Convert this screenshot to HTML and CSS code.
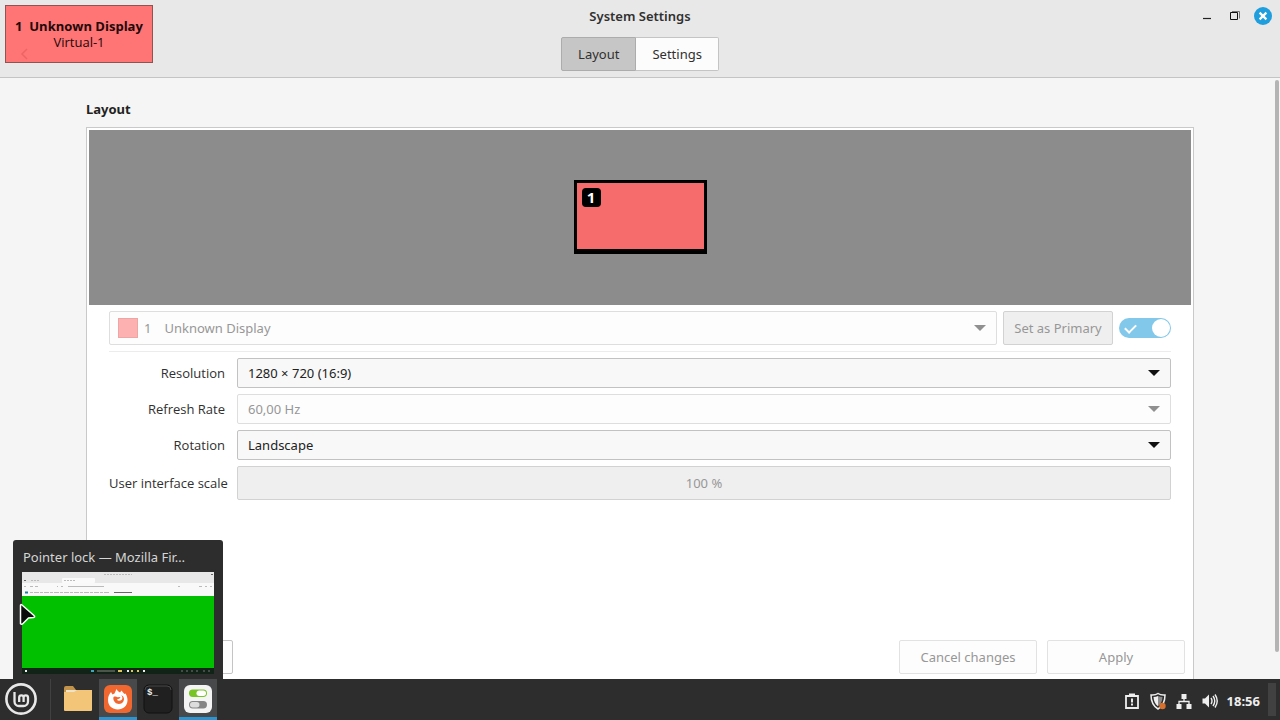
FILE: index.html
```html
<!DOCTYPE html>
<html lang="en">
<head>
<meta charset="utf-8">
<title>System Settings</title>
<link rel="stylesheet" href="styles.css">
</head>
<body>
<div class="window">
  <header class="header">
    <div class="titlebar">
      <h1 class="title">System Settings</h1>
      <div class="window-buttons">
        <button class="window-button" type="button" aria-label="Minimize"><svg width="18" height="18" viewBox="0 0 18 18"><path d="M5 11.500h8" stroke="#222" stroke-width="1.2"/></svg></button>
        <button class="window-button" type="button" aria-label="Restore"><svg width="18" height="18" viewBox="0 0 18 18"><path d="M6 4.500h7.500v7" fill="none" stroke="#777"/><path d="M4.500 5.500h7v7h-7z" fill="none" stroke="#111"/></svg></button>
        <button class="window-button" type="button" aria-label="Close"><svg width="18" height="18" viewBox="0 0 18 18"><circle cx="9" cy="9" r="9" fill="#1f9ede"/><path d="M5.600 5.600l6.800 6.800M12.400 5.600l-6.800 6.800" stroke="#fff" stroke-width="2.200"/></svg></button>
      </div>
    </div>
    <nav class="tabs">
      <button class="tab tab-active" type="button">Layout</button>
      <button class="tab" type="button">Settings</button>
    </nav>
  </header>

  <main class="content">
    <h2 class="section-title">Layout</h2>
    <section class="card">
      <div class="canvas">
        <div class="monitor"><span class="monitor-number">1</span></div>
      </div>
      <form class="form">
        <div class="display-row">
          <div class="select-wrap select-display is-disabled">
            <span class="swatch"></span>
            <select class="select" aria-label="Display" disabled><option>1&emsp;Unknown Display</option></select>
          </div>
          <button class="button button-primary" type="button" disabled>Set as Primary</button>
          <input class="switch" type="checkbox" aria-label="Display enabled" checked disabled>
        </div>
        <div class="fields">
          <label class="label" for="resolution">Resolution</label>
          <div class="select-wrap"><select class="select" id="resolution"><option>1280 × 720 (16:9)</option></select></div>
          <label class="label" for="refresh">Refresh Rate</label>
          <div class="select-wrap is-disabled"><select class="select" id="refresh" disabled><option>60,00 Hz</option></select></div>
          <label class="label" for="rotation">Rotation</label>
          <div class="select-wrap"><select class="select" id="rotation"><option>Landscape</option></select></div>
          <label class="label" for="scale">User interface scale</label>
          <button class="button button-scale" id="scale" type="button" disabled>100 %</button>
        </div>
      </form>
      <div class="actions">
        <button class="button action action-first" type="button" aria-label="Defaults"></button>
        <button class="button action" type="button" disabled>Cancel changes</button>
        <button class="button action" type="button" disabled>Apply</button>
      </div>
    </section>
  </main>
  <div class="scrollbar"></div>
</div>

<footer class="panel">
  <button class="panel-item menu" type="button" aria-label="Menu">
    <svg width="34" height="34" viewBox="0 0 34 34" fill="none" stroke="#e8e8e8"><circle cx="17" cy="17" r="14.600" stroke-width="2.600"/><path d="M10.500 10v9.500a4.500 4.500 0 0 0 4.500 4.500h4.500a4.500 4.500 0 0 0 4.500-4.500v-4a2.200 2.200 0 0 0-4.400 0v4.500M19.600 15.500a2.200 2.200 0 0 0-4.400 0v4.500" stroke-width="2.300"/></svg>
  </button>
  <div class="panel-separator"></div>
  <button class="panel-item" type="button" aria-label="Files">
    <svg width="30" height="30" viewBox="0 0 30 30"><path d="M1 4q0-2 2-2h7l3 4h14q2 0 2 2v18H1z" fill="#c2934a"/><path d="M3 6h24v5H3z" fill="#eee3c8"/><path d="M1 8h10l3-2h15v20q0 1-1 1H2q-1 0-1-1z" fill="#f3c578"/></svg>
  </button>
  <button class="panel-item panel-running" type="button" aria-label="Firefox">
    <svg width="30" height="30" viewBox="0 0 30 30"><rect x="1" y="1" width="28" height="28" rx="6" fill="#f0682f"/><path d="M5 16c0-4 1.500-6 3-8l1.500 2.500 2-1 2-4.500c1 2 2 2.500 3.500 3.500l1.500-2c1 1.500 2 2.500 3 3.500l1-.5c1.500 2.500 2 4.500 2 6.500 0 6-4.500 9.500-9.700 9.500S5 22 5 16z" fill="#fff"/><path d="M10.500 13c1.500-.8 3-.5 4 .3l3-.3c-.5 1.500-2 2-3.500 2.500.5 1.500 3 1.800 4.500.5 1.500-1.200 1-3.500-.3-5 3 1.500 3.500 4.500 2 6.700-1.800 2.600-5.700 3-8 .8-1.500-1.500-2.200-3.500-1.700-5.500z" fill="#f0682f"/></svg>
  </button>
  <button class="panel-item" type="button" aria-label="Terminal">
    <svg width="30" height="30" viewBox="0 0 30 30"><rect x="1" y="1" width="28" height="28" rx="5" fill="#202020" stroke="#111"/><path d="M2 6a4 4 0 0 1 4-4h18a4 4 0 0 1 4 4" fill="none" stroke="#484848"/><text class="prompt" x="4" y="11">$_</text></svg>
  </button>
  <button class="panel-item panel-running" type="button" aria-label="System Settings">
    <svg width="30" height="30" viewBox="0 0 30 30"><rect x="1" y="1" width="28" height="28" rx="6" fill="#f4f4f4"/><rect x="6" y="5.500" width="18" height="7.500" rx="3.700" fill="#78c325"/><rect x="13.500" y="6.500" width="9.500" height="5.500" rx="2.700" fill="#fff"/><rect x="6" y="17" width="18" height="7.500" rx="3.700" fill="#858585"/><rect x="7" y="18" width="9.500" height="5.500" rx="2.700" fill="#ddd"/></svg>
  </button>
  <div class="tray">
    <svg width="18" height="18" viewBox="0 0 18 18"><path d="M3 4h12v12H3z" fill="none" stroke="#eee" stroke-width="1.800"/><path d="M6 1.500h6V5H6zM8 6.500h2v4H8zM8 11.500h2v2H8z" fill="#eee"/></svg>
    <svg width="18" height="18" viewBox="0 0 18 18"><path d="M9 1.500q3 2 7 1.500c0 7-2 11-7 14-5-3-7-7-7-14q4 .5 7-1.500z" fill="none" stroke="#eee" stroke-width="1.500"/><path d="M9 4q2 1 4.500 1C13.300 9 12 12 9 14.300z" fill="#8b8b8b"/><path d="M9 4q-2 1-4.500 1C4.700 9 6 12 9 14.300z" fill="#eee"/><circle cx="13.500" cy="14" r="3.200" fill="#d8702e"/></svg>
    <svg width="18" height="18" viewBox="0 0 18 18"><path d="M6.500 2h5v5h-5zM1.500 12h5v5h-5zM11.500 12h5v5h-5z" fill="#eee"/><path d="M9 7v3M4 12V9.500h10V12" fill="none" stroke="#eee" stroke-width="1.300"/></svg>
    <svg width="18" height="18" viewBox="0 0 18 18"><path d="M1.500 6.500H4l4-4v13l-4-4H1.500z" fill="#eee"/><path d="M10 6q2 3 0 6M12 4q3.500 5 0 10M14 2.500q4.500 6.500 0 13" fill="none" stroke="#eee" stroke-width="1.400"/></svg>
    <time class="clock">18:56</time>
  </div>
  <div class="show-desktop"></div>
</footer>

<aside class="osd">
  <strong>1&nbsp; Unknown Display</strong>
  <span>Virtual-1</span>
  <svg class="osd-back" width="10" height="12" viewBox="0 0 10 12"><path d="M8 1L3 6l5 5" fill="none" stroke="#ee6464" stroke-width="1.500"/></svg>
</aside>

<aside class="preview">
  <p class="preview-title">Pointer lock — Mozilla Fir…</p>
  <svg class="preview-image" viewBox="0 0 192 102">
    <rect width="192" height="102" fill="#00c000"/>
    <rect width="192" height="24" fill="#f9f9f9"/>
    <rect width="192" height="11" fill="#e8e8e8"/>
    <rect x="40" y="6" width="33" height="5" rx="1" fill="#fafafa"/>
    <g fill="none" stroke="#bbb">
      <path d="M82 2.500h28M42 8.500h11M9 8.500h9" stroke-dasharray="2 1"/>
      <path d="M2 14.500h2m4 0h3m2 0h3M35 14.500h1m3 0h2m5 0h36m74 0h2m19 0h3m3 0h2m3 0h2" />
      <path d="M8 20.500h79" stroke-dasharray="3 1 5 1"/>
      <path d="M92 20.500h18M189 2.500h2M2 8.500h2" stroke="#666"/>
      <path d="M3 20.500h3" stroke="#1581a0" stroke-width="2"/>
    </g>
    <rect y="96" width="192" height="6" fill="#102316"/>
    <g fill="none" stroke-width="2">
      <path d="M3 99h2m116 0h2m-18 0h2" stroke="#eee"/><path d="M69 99h3" stroke="#3ba8c0"/><path d="M75 99h18" stroke="#4b5548"/>
      <path d="M96 99h4m9 0h2m4 0h2" stroke="#e2c65b"/><path d="M159 99h17m5 0h7" stroke="#777" stroke-width="1" stroke-dasharray="2 3"/>
    </g>
  </svg>
</aside>

<svg class="cursor" width="18" height="24" viewBox="0 0 18 24"><path d="M1.500 2.500Q1.500 1 3 2l12 10.500q1.500 1.500-.5 2L9.500 15 4 20.500q-1.500 1.500-2.500 0z" fill="#0b0b0b" stroke="#fff" stroke-width="1.500"/></svg>
</body>
</html>
```
FILE: styles.css
```css
* { box-sizing: border-box; }

body {
  margin: 0;
  height: 100vh;
  display: flex;
  flex-direction: column;
  overflow: hidden;
  background: #f5f5f5;
  color: #303030;
  font: 13px/16px "Noto Sans", "Open Sans", sans-serif;
}

button, select { font: inherit; color: inherit; }
h1, h2, p { margin: 0; font-size: inherit; }

.window {
  position: relative;
  flex: 1;
  min-height: 0;
  display: flex;
  flex-direction: column;
}

.header {
  padding-bottom: 6px;
  border-bottom: 1px solid #c4c4c4;
  background: #e8e8e8;
}
.titlebar {
  display: grid;
  grid-template-columns: 1fr auto 1fr;
  align-items: center;
  height: 32px;
  margin-bottom: 5px;
}
.title { grid-column: 2; font-weight: 600; }
.window-buttons {
  display: flex;
  justify-content: flex-end;
  gap: 10px;
  padding-right: 8px;
}
.window-button {
  width: 18px;
  height: 18px;
  padding: 0;
  border: 0;
  background: none;
}
.window-button svg { display: block; }

.tabs { display: flex; justify-content: center; }
.tab {
  height: 34px;
  padding: 0 16px;
  border: 1px solid #c4c4c4;
  border-left: 0;
  border-radius: 0 2px 2px 0;
  background: #fcfcfc;
}
.tab-active {
  border: 1px solid #acacac;
  border-radius: 2px 0 0 2px;
  background: #c6c6c6;
}

.content {
  flex: 1;
  min-height: 0;
  display: flex;
  flex-direction: column;
  padding: 23px 86px 0;
}
.section-title { margin-bottom: 10px; font-weight: 700; color: #222; }
.card {
  flex: 1;
  min-height: 0;
  display: flex;
  flex-direction: column;
  padding: 2px 2px 5px;
  border: 1px solid #c9c9c9;
  border-bottom: 0;
  background: #fff;
}
.canvas {
  flex: none;
  display: flex;
  justify-content: center;
  height: 175px;
  padding-top: 50px;
  background: #8c8c8c;
}
.monitor {
  width: 133px;
  height: 74px;
  padding: 5px;
  border: 3px solid #000;
  border-bottom-width: 5px;
  background: #f66c6c;
}
.monitor-number {
  display: block;
  width: 19px;
  height: 19px;
  border-radius: 4px;
  background: #000;
  color: #fff;
  font-size: 15px;
  font-weight: 700;
  line-height: 19px;
  text-align: center;
}

.form { padding: 6px 20px 0; }
.display-row {
  display: flex;
  align-items: center;
  gap: 6px;
  padding-bottom: 6px;
  border-bottom: 1px solid #ececec;
}
.select-wrap { position: relative; display: flex; }
.select-display { flex: 1; }
.select {
  width: 100%;
  height: 30px;
  padding: 0 30px 1px 10px;
  border: 1px solid #c2c2c2;
  border-radius: 2px;
  background: #f8f8f8;
  color: #222;
  appearance: none;
}
.select-wrap::after {
  content: "";
  position: absolute;
  top: 50%;
  right: 11px;
  width: 12px;
  height: 6px;
  margin-top: -3px;
  background: #111;
  clip-path: polygon(0 0, 100% 0, 50% 100%);
  pointer-events: none;
}
.is-disabled .select {
  border-color: #dedede;
  background: #fdfdfd;
  color: #979797;
  opacity: 1;
}
.is-disabled::after { background: #909090; }
.select-display .select { height: 34px; padding-left: 34px; }
.swatch {
  position: absolute;
  top: 7px;
  left: 9px;
  width: 20px;
  height: 20px;
  border: 1px solid #eda6a6;
  background: #fdb1b1;
}
.button {
  height: 34px;
  padding: 0 11px;
  border: 1px solid #d2d2d2;
  border-radius: 2px;
  background: #efefef;
  color: #979797;
}
.button-primary { width: 110px; padding: 0; }
.switch {
  position: relative;
  width: 52px;
  height: 20px;
  margin: 0;
  border-radius: 10px;
  background: #82c8ea;
  appearance: none;
}
.switch::before {
  content: "";
  position: absolute;
  top: 6px;
  left: 6px;
  width: 9px;
  height: 5px;
  border: solid #fff;
  border-width: 0 0 2px 2px;
  transform: rotate(-45deg);
}
.switch::after {
  content: "";
  position: absolute;
  top: 1px;
  right: 1px;
  width: 18px;
  height: 18px;
  border-radius: 50%;
  background: #fff;
}

.fields {
  display: grid;
  grid-template-columns: 116px 1fr;
  gap: 6px 12px;
  align-items: center;
  padding-top: 6px;
}
.label {
  font-family: "Open Sans", "Noto Sans", sans-serif;
  text-align: right;
  white-space: nowrap;
}

.actions {
  display: flex;
  gap: 10px;
  margin-top: auto;
  padding: 0 6px;
}
.action {
  width: 138px;
  border-color: #e2e2e2;
  background: #fdfdfd;
}
.action-first { margin-right: auto; border-color: #c4c4c4; }

.scrollbar {
  position: absolute;
  top: 80px;
  right: 1px;
  bottom: 27px;
  width: 4px;
  border-radius: 2px;
  background: #b4b4b4;
}

.panel {
  flex: none;
  display: flex;
  height: 41px;
  background: #2d2d2d;
}
.panel-item {
  display: flex;
  align-items: center;
  justify-content: center;
  width: 38px;
  margin-right: 2px;
  padding: 0 0 1px;
  border: 0;
  background: none;
}
.panel-running {
  padding-top: 2px;
  border-bottom: 3px solid #2c94d0;
  background: #48494b;
}
.menu { width: 42px; margin-right: 8px; }
.panel-separator { width: 1px; margin-right: 8px; background: #414141; }
.prompt { font: 700 9px "Liberation Mono", monospace; fill: #eee; }
.tray {
  display: flex;
  align-items: center;
  gap: 8px;
  margin-left: auto;
  padding: 2px 8px 0 0;
}
.clock {
  color: #eee;
  font-family: "Open Sans", "Noto Sans", sans-serif;
  font-weight: 700;
}
.show-desktop { width: 8px; margin: 4px 4px 4px 0; background: #414141; }

.osd {
  position: absolute;
  top: 5px;
  left: 5px;
  display: flex;
  flex-direction: column;
  align-items: center;
  width: 148px;
  padding: 12px 0;
  border: 1px solid #93524f;
  background: #ff7474;
  color: #220808;
  font-family: "Open Sans", "Noto Sans", sans-serif;
  white-space: nowrap;
}
.osd-back { position: absolute; bottom: 2px; left: 13px; }

.preview {
  position: absolute;
  bottom: 41px;
  left: 13px;
  width: 210px;
  padding: 9px 9px 5px;
  border-radius: 3px 3px 0 0;
  background: #2d2d2d;
  color: #d6d6d6;
}
.preview-title { margin-bottom: 7px; padding-left: 1px; white-space: nowrap; }
.preview-image { display: block; width: 100%; }

.cursor { position: absolute; top: 603px; left: 19px; }
```
